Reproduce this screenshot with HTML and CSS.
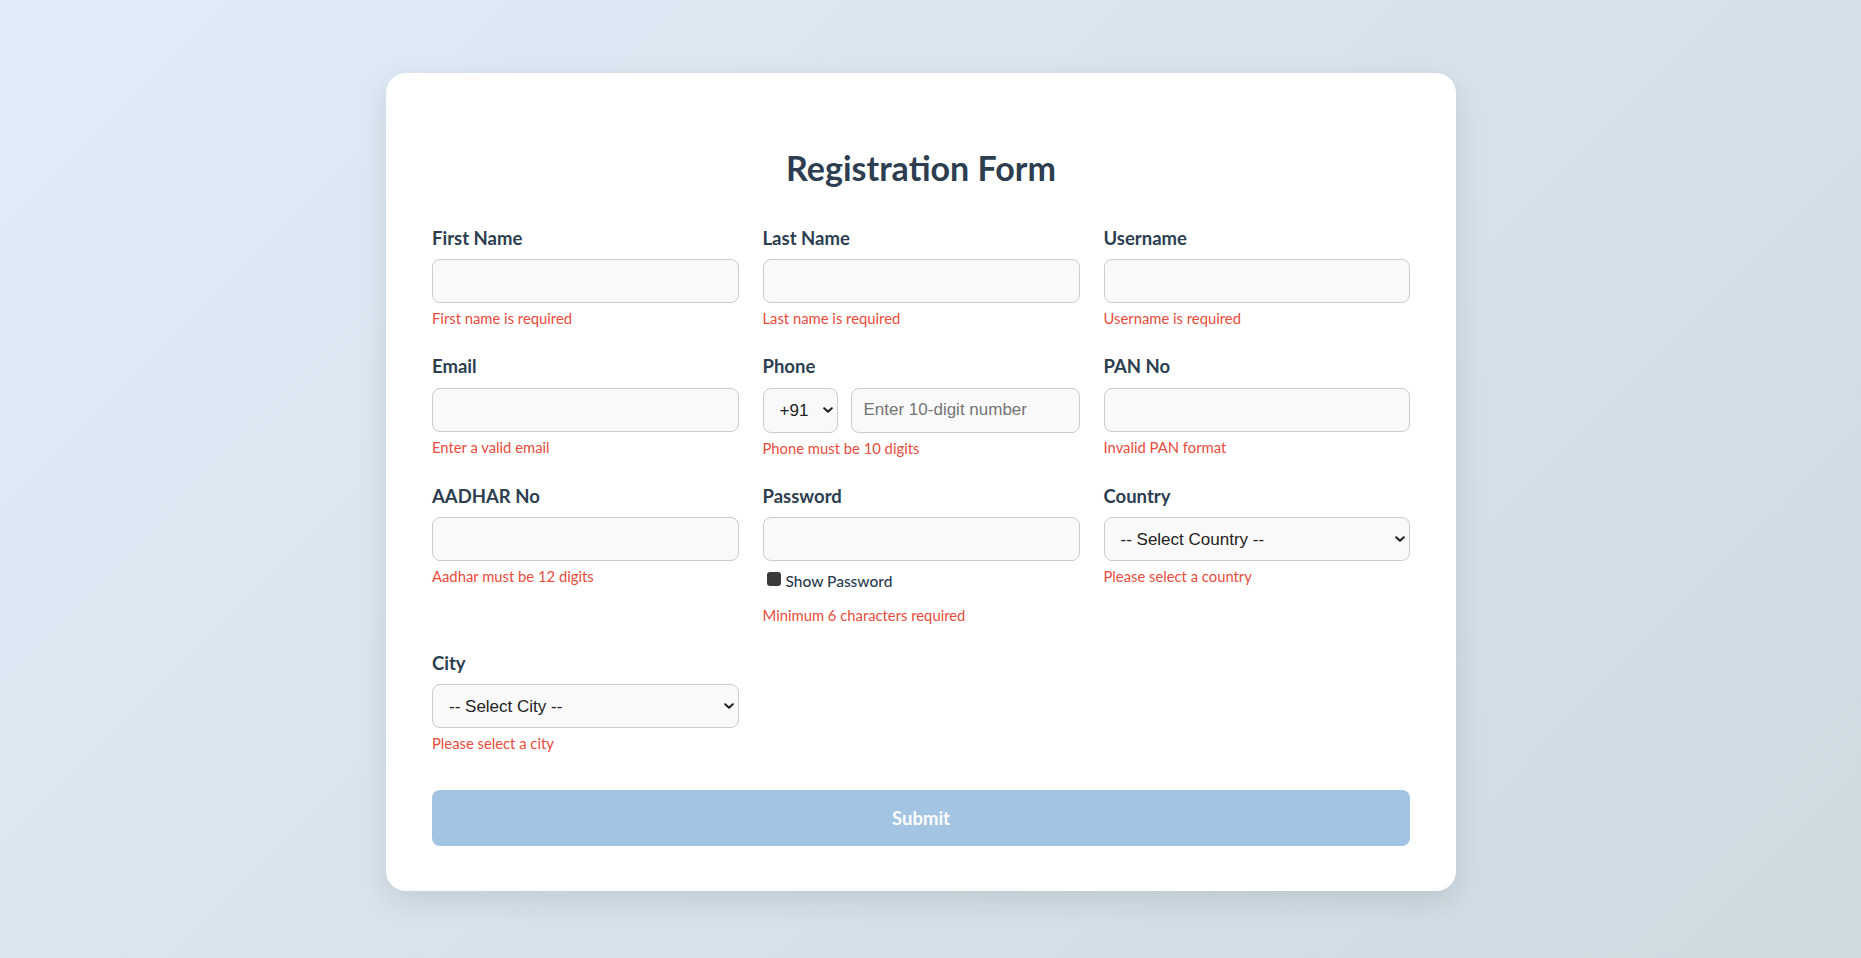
FILE: index.html
```html
<!DOCTYPE html>
<html lang="en">
<head>
<meta charset="utf-8">
<title>Registration Form</title>
<link rel="stylesheet" href="styles.css">
</head>
<body>
<div class="page">
  <form class="card" novalidate>
    <h1 class="title">Registration Form</h1>
    <div class="grid">
      <div class="field">
        <label class="label" for="fn">First Name</label>
        <input class="control" id="fn" type="text">
        <p class="error">First name is required</p>
      </div>
      <div class="field">
        <label class="label" for="ln">Last Name</label>
        <input class="control" id="ln" type="text">
        <p class="error">Last name is required</p>
      </div>
      <div class="field">
        <label class="label" for="un">Username</label>
        <input class="control" id="un" type="text">
        <p class="error">Username is required</p>
      </div>

      <div class="field">
        <label class="label" for="em">Email</label>
        <input class="control" id="em" type="email">
        <p class="error">Enter a valid email</p>
      </div>
      <div class="field">
        <label class="label" for="ph">Phone</label>
        <div class="phone-row">
          <span class="select-wrap code">
            <select class="control select"><option>+91</option></select>
            <svg class="chevron" width="10" height="6" viewBox="0 0 10 6"><path d="M1.2 1.2 5 4.8 8.8 1.2" fill="none" stroke="#222" stroke-width="2" stroke-linecap="round" stroke-linejoin="round"/></svg>
          </span>
          <input class="control" id="ph" type="tel" placeholder="Enter 10-digit number">
        </div>
        <p class="error">Phone must be 10 digits</p>
      </div>
      <div class="field">
        <label class="label" for="pan">PAN No</label>
        <input class="control" id="pan" type="text">
        <p class="error">Invalid PAN format</p>
      </div>

      <div class="field">
        <label class="label" for="aa">AADHAR No</label>
        <input class="control" id="aa" type="text">
        <p class="error">Aadhar must be 12 digits</p>
      </div>
      <div class="field">
        <label class="label" for="pw">Password</label>
        <input class="control" id="pw" type="password">
        <label class="show-pw"><input type="checkbox">Show Password</label>
        <p class="error error-gap">Minimum 6 characters required</p>
      </div>
      <div class="field">
        <label class="label" for="co">Country</label>
        <span class="select-wrap">
          <select class="control select" id="co"><option>-- Select Country --</option></select>
          <svg class="chevron" width="10" height="6" viewBox="0 0 10 6"><path d="M1.2 1.2 5 4.8 8.8 1.2" fill="none" stroke="#222" stroke-width="2" stroke-linecap="round" stroke-linejoin="round"/></svg>
        </span>
        <p class="error">Please select a country</p>
      </div>

      <div class="field">
        <label class="label" for="ci">City</label>
        <span class="select-wrap">
          <select class="control select" id="ci"><option>-- Select City --</option></select>
          <svg class="chevron" width="10" height="6" viewBox="0 0 10 6"><path d="M1.2 1.2 5 4.8 8.8 1.2" fill="none" stroke="#222" stroke-width="2" stroke-linecap="round" stroke-linejoin="round"/></svg>
        </span>
        <p class="error">Please select a city</p>
      </div>
    </div>
    <button class="submit" type="submit" disabled>Submit</button>
  </form>
</div>
</body>
</html>
```

FILE: styles.css
```css
html, body {
  margin: 0;
  padding: 0;
}

body {
  font-family: "Lato", "Open Sans", "Noto Sans", sans-serif;
  color: #2c3e50;
}

.page {
  min-height: 100vh;
  box-sizing: border-box;
  padding: 6px 19px 0 0;
  display: flex;
  align-items: center;
  justify-content: center;
  background: linear-gradient(135deg, #e0ecf8 0%, #cfd9e0 100%);
}

.card {
  width: 1070px;
  box-sizing: border-box;
  padding: 45px 46px;
  background: #ffffff;
  border-radius: 20px;
  box-shadow: 0 10px 30px rgba(0, 0, 0, 0.1);
}

.title {
  margin: 30px 0 38px;
  text-align: center;
  font-size: 34px;
  line-height: 1.2;
  font-weight: 700;
  color: #2c3e50;
}

.grid {
  display: grid;
  grid-template-columns: minmax(0, 1fr) 317px minmax(0, 1fr);
  column-gap: 24px;
  row-gap: 27.5px;
  align-items: start;
}

.label {
  display: block;
  margin-bottom: 10px;
  font-size: 18.5px;
  line-height: 1.2;
  font-weight: 700;
  color: #2c3e50;
}

.control {
  display: block;
  width: 100%;
  height: 44px;
  box-sizing: border-box;
  margin: 0;
  padding: 0 12px;
  border: 1px solid #cccccc;
  border-radius: 8px;
  background: #f9f9f9;
  font-family: "Liberation Sans", Arial, sans-serif;
  font-size: 17px;
  color: #222222;
  outline: none;
}

.control::placeholder {
  color: #757575;
}

.select-wrap {
  position: relative;
  display: block;
}

.select {
  appearance: none;
  -webkit-appearance: none;
  padding-left: 16px;
  padding-right: 24px;
}

.chevron {
  position: absolute;
  right: 5px;
  top: 50%;
  margin-top: -3px;
  pointer-events: none;
}

.error {
  margin: 7px 0 0;
  font-size: 14.8px;
  line-height: 1.2;
  color: #e74c3c;
}

.error-gap {
  margin-top: 16px;
}

.phone-row {
  display: flex;
  gap: 13px;
}

.phone-row .control {
  height: 45px;
}

.code {
  flex: 0 0 75px;
}

.phone-row input {
  flex: 1;
  min-width: 0;
}

.show-pw {
  display: block;
  margin-top: 11px;
  font-size: 15.5px;
  line-height: 1.2;
  font-weight: 500;
  color: #2c3e50;
}

.show-pw input {
  appearance: none;
  -webkit-appearance: none;
  display: inline-block;
  width: 14px;
  height: 14px;
  margin: 0 5px 1px 4px;
  background: #3b3b3b;
  border-radius: 3px;
  vertical-align: baseline;
}

.submit {
  display: block;
  width: 100%;
  height: 56px;
  margin-top: 37px;
  border: 0;
  border-radius: 8px;
  background: #a4c4e3;
  color: #ffffff;
  font-family: "Lato", "Open Sans", sans-serif;
  font-size: 18.5px;
  font-weight: 700;
}
```
